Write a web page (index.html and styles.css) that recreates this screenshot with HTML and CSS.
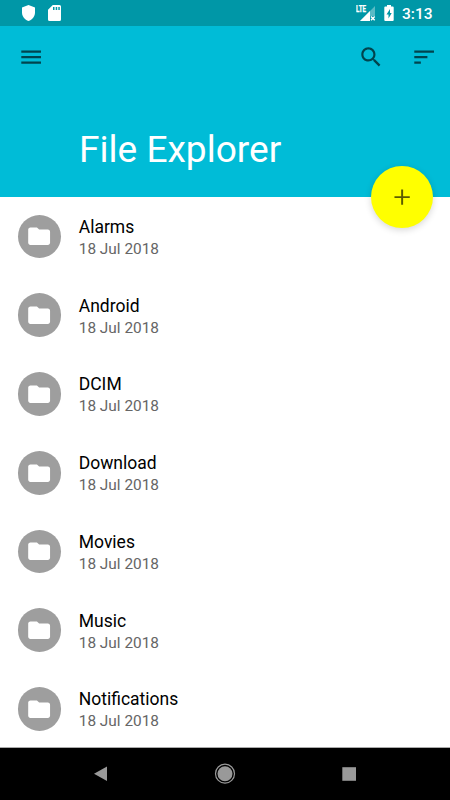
FILE: index.html
```html
<!DOCTYPE html>
<html lang="en">
  <head>
    <meta charset="utf-8">
    <title>File Explorer</title>
    <link rel="stylesheet" href="styles.css">
  </head>
  <body>
    <svg class="symbols">
      <symbol id="folder" viewBox="0 0 24 24">
        <path d="M10 4H4c-1.1 0-1.99.9-1.99 2L2 18c0 1.1.9 2 2 2h16c1.1 0 2-.9 2-2V8c0-1.1-.9-2-2-2h-8l-2-2z"/>
      </symbol>
    </svg>

    <div class="statusbar">
      <svg class="shield" viewBox="0 0 13 16"><path d="M6.5 0L13 2.6V7.500C13 11.500 10.300 14.600 6.500 16C2.700 14.600 0 11.500 0 7.500V2.600z"/></svg>
      <svg class="sdcard" viewBox="0 0 13 16"><path fill-rule="evenodd" d="M4.800 0H11.500Q13 0 13 1.500V14.500Q13 16 11.500 16H1.500Q0 16 0 14.500V4.800zM5 2V5H6.500V2zM7.700 2V5H9.200V2zM10.300 2V5H11.800V2z"/></svg>
      <svg class="signal" viewBox="0 0 20 16">
        <path opacity=".35" d="M19 1V11H14V16H4z"/>
        <path d="M14 6V16H4z"/>
        <path class="cross" d="M15 11.500l3.700 3.700M18.700 11.500L15 15.200"/>
        <text x="0" y="7.300" textLength="10" lengthAdjust="spacingAndGlyphs">LTE</text>
      </svg>
      <svg class="battery" viewBox="0 0 10 16"><path fill-rule="evenodd" d="M3 0H7V1.600H8.700Q9.700 1.600 9.700 2.600V15Q9.700 16 8.700 16H1.300Q.3 16 .3 15V2.600Q.3 1.600 1.300 1.600H3zM6 4L2.500 9.500H4.500V13.500L7.700 8H6z"/></svg>
      <span class="clock">3:13</span>
    </div>

    <header class="header">
      <div class="toolbar">
        <svg class="icon" viewBox="0 0 24 24"><path d="M3 18h18v-2H3v2zm0-5h18v-2H3v2zm0-7v2h18V6H3z"/></svg>
        <svg class="icon search" viewBox="0 0 24 24"><path d="M15.500 14h-.79l-.28-.27C15.410 12.590 16 11.110 16 9.500 16 5.910 13.090 3 9.500 3S3 5.910 3 9.500 5.910 16 9.500 16c1.610 0 3.090-.59 4.230-1.570l.27.28v.79l5 4.990L20.490 19l-4.990-5zm-6 0C7.010 14 5 11.990 5 9.500S7.010 5 9.500 5 14 7.010 14 9.500 11.990 14 9.500 14z"/></svg>
        <svg class="icon" viewBox="0 0 24 24"><path d="M3 18h6v-2H3v2zM3 6v2h18V6H3zm0 7h12v-2H3v2z"/></svg>
      </div>
      <h1>File Explorer</h1>
      <button class="fab" type="button" aria-label="Add">
        <svg class="icon" viewBox="0 0 24 24"><path d="M19 12.900h-6.100v6.100h-1.800v-6.100H5v-1.800h6.100V5h1.800v6.100H19z"/></svg>
      </button>
    </header>

    <ul class="files">
      <li>
        <div class="avatar"><svg><use href="#folder"/></svg></div>
        <div class="info"><p class="name">Alarms</p><p class="date">18 Jul 2018</p></div>
      </li>
      <li>
        <div class="avatar"><svg><use href="#folder"/></svg></div>
        <div class="info"><p class="name">Android</p><p class="date">18 Jul 2018</p></div>
      </li>
      <li>
        <div class="avatar"><svg><use href="#folder"/></svg></div>
        <div class="info"><p class="name">DCIM</p><p class="date">18 Jul 2018</p></div>
      </li>
      <li>
        <div class="avatar"><svg><use href="#folder"/></svg></div>
        <div class="info"><p class="name">Download</p><p class="date">18 Jul 2018</p></div>
      </li>
      <li>
        <div class="avatar"><svg><use href="#folder"/></svg></div>
        <div class="info"><p class="name">Movies</p><p class="date">18 Jul 2018</p></div>
      </li>
      <li>
        <div class="avatar"><svg><use href="#folder"/></svg></div>
        <div class="info"><p class="name">Music</p><p class="date">18 Jul 2018</p></div>
      </li>
      <li>
        <div class="avatar"><svg><use href="#folder"/></svg></div>
        <div class="info"><p class="name">Notifications</p><p class="date">18 Jul 2018</p></div>
      </li>
    </ul>

    <nav class="navbar">
      <svg viewBox="0 0 22 22"><path d="M4 10.800L17 3.600V18z"/></svg>
      <svg viewBox="0 0 22 22"><circle cx="11" cy="10.700" r="7.500"/><circle class="ring" cx="11" cy="10.700" r="9.500"/></svg>
      <svg viewBox="0 0 22 22"><path d="M4.300 4.200H18V17.800H4.300z"/></svg>
    </nav>
  </body>
</html>
```

FILE: styles.css
```css
* {
  box-sizing: border-box;
}
body {
  margin: 0;
  height: 800px;
  display: flex;
  flex-direction: column;
  overflow: hidden;
  background: #fff;
  font-family: Roboto, sans-serif;
}
svg {
  display: block;
  flex-shrink: 0;
}
.symbols {
  display: none;
}

.statusbar {
  height: 26px;
  flex-shrink: 0;
  display: flex;
  align-items: center;
  padding: 0 17px 0 22px;
  background: #0097a7;
  fill: #fff;
}
.shield,
.sdcard {
  width: 13px;
  height: 16px;
}
.sdcard {
  margin-left: 13px;
}
.signal {
  width: 20px;
  height: 16px;
  margin-left: auto;
}
.signal text {
  font-size: 9px;
  font-weight: 700;
  stroke: #fff;
  stroke-width: 0.3;
}
.cross {
  stroke: #fff;
  stroke-width: 1.5;
}
.battery {
  width: 10px;
  height: 16px;
  margin-left: 8px;
}
.clock {
  width: 31px;
  margin-left: 8px;
  color: #fff;
  font-size: 15.5px;
  font-weight: 500;
  line-height: 26px;
  padding-top: 1px;
}

.header {
  position: relative;
  height: 171px;
  flex-shrink: 0;
  background: #00bcd7;
}
.toolbar {
  display: flex;
  padding: 17.5px 13.2px 0 17.5px;
}
.icon {
  width: 26.25px;
  height: 26.25px;
  fill: rgba(0, 0, 0, 0.64);
}
.search {
  margin: 0 26.8px 0 auto;
}
.header h1 {
  margin: 58.2px 0 0 79px;
  color: #fff;
  font-size: 37.1px;
  font-weight: 400;
  line-height: 44px;
}
.fab {
  position: absolute;
  right: 17px;
  bottom: -31px;
  width: 62px;
  height: 62px;
  padding: 0;
  border: 0;
  border-radius: 50%;
  display: flex;
  align-items: center;
  justify-content: center;
  background: #ff0;
  box-shadow: 0 2px 7px rgba(0, 0, 0, 0.16);
}

.files {
  flex: 1;
  min-height: 0;
  margin: 0;
  padding: 0;
  list-style: none;
  overflow: hidden;
}
.files li {
  height: 78.77px;
  display: flex;
  align-items: center;
  padding-left: 17.5px;
}
.avatar {
  width: 43.75px;
  height: 43.75px;
  margin-right: 17.5px;
  border-radius: 50%;
  display: flex;
  align-items: center;
  justify-content: center;
  background: #9e9e9e;
}
.avatar svg {
  width: 26.25px;
  height: 26.25px;
  fill: #fff;
}
.info {
  padding-top: 3px;
}
.info p {
  margin: 0;
  line-height: 22px;
}
.name {
  color: #000;
  font-size: 17.5px;
}
.date {
  color: #666;
  font-size: 15.4px;
}

.navbar {
  height: 53px;
  flex-shrink: 0;
  display: flex;
  justify-content: space-between;
  align-items: center;
  padding: 0 90px;
  border-top: 1px solid #aaa;
  background: #000;
  fill: #999;
}
.navbar svg {
  width: 22px;
  height: 22px;
}
.ring {
  fill: none;
  stroke: #999;
  stroke-width: 1.2;
}
```
